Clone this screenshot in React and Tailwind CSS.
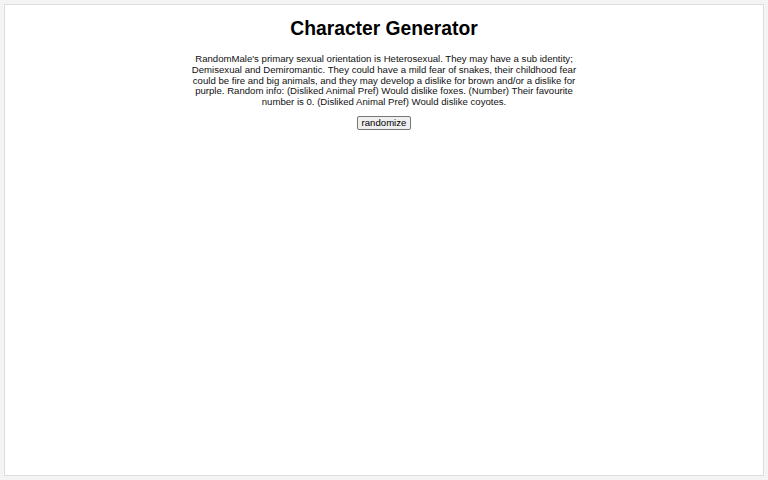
import React, { useState } from 'react';

const TEXT =
  "RandomMale's primary sexual orientation is Heterosexual. They may have a sub identity; Demisexual and Demiromantic. They could have a mild fear of snakes, their childhood fear could be fire and big animals, and they may develop a dislike for brown and/or a dislike for purple. Random info: (Disliked Animal Pref) Would dislike foxes. (Number) Their favourite number is 0. (Disliked Animal Pref) Would dislike coyotes.";

export default function App() {
  const [text] = useState(TEXT);
  return (
    <div className="h-[480px] w-[768px] bg-[#f4f4f4] p-[4px] font-['Liberation_Sans',Arial,sans-serif] text-black">
      <div className="flex h-full flex-col items-center border border-[#dddddd] bg-white pt-[12px]">
        <h1 className="text-[19.3px] font-bold leading-[23px]">Character Generator</h1>
        <p className="mt-[14px] w-[386px] text-center text-[9.6px] leading-[10.75px] text-[#111]">{text}</p>
        <button className="mt-[8px] rounded-[2px] border border-[#767676] bg-[#efefef] px-[4px] text-[9.6px] leading-[12px]">
          randomize
        </button>
      </div>
    </div>
  );
}
